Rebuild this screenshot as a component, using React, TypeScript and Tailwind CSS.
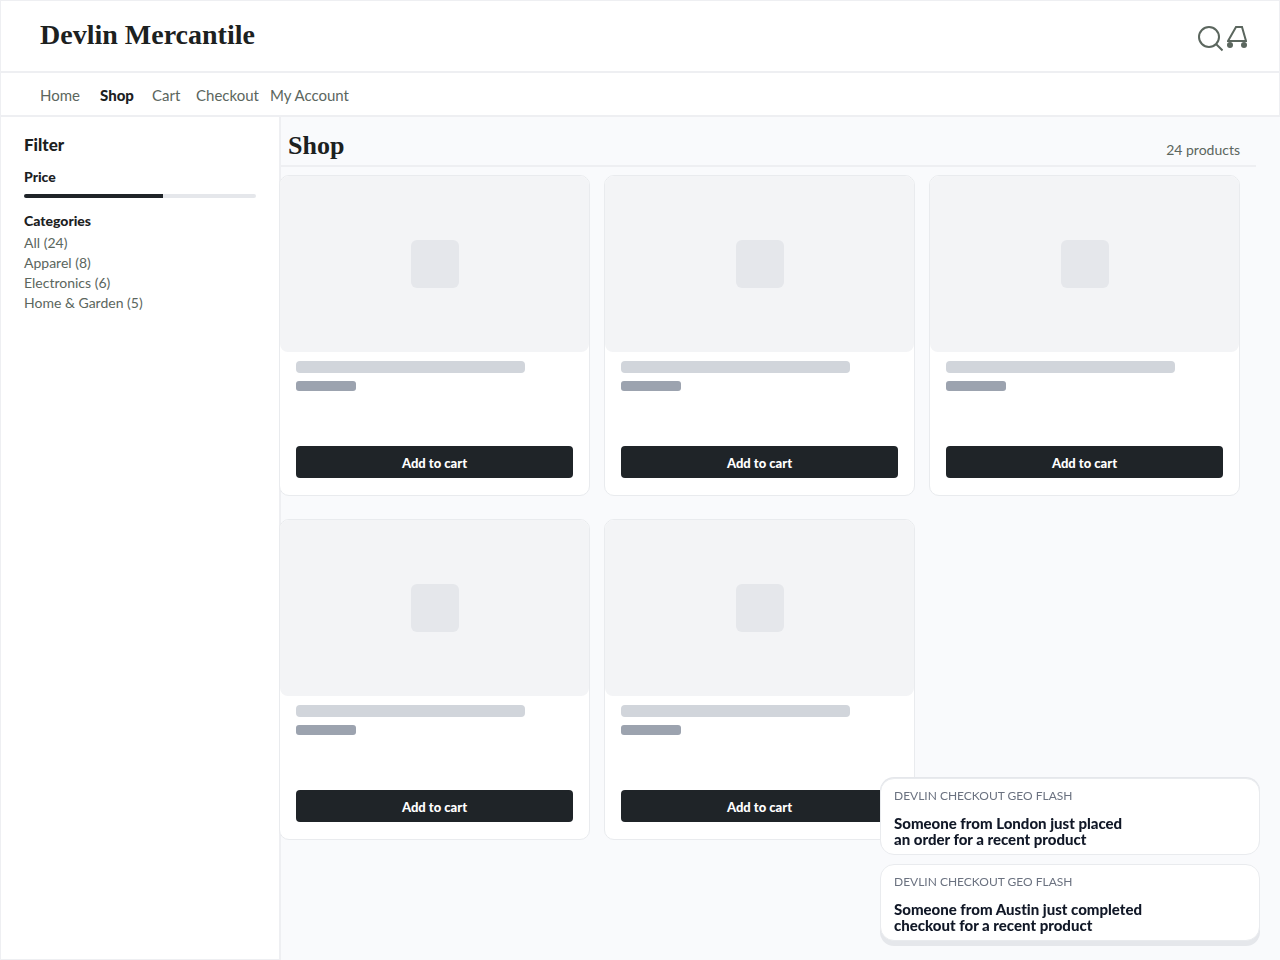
import { useState } from "react";

const navItems = [
  { label: "Home", width: "w-15" },
  { label: "Shop", width: "w-13", active: true },
  { label: "Cart", width: "w-11" },
  { label: "Checkout", width: "w-[74px]" },
  { label: "My Account", width: "w-20" },
];

const categories = [
  { name: "All", count: 24 },
  { name: "Apparel", count: 8 },
  { name: "Electronics", count: 6 },
  { name: "Home & Garden", count: 5 },
];

const products = [1, 2, 3, 4, 5];

const notices = [
  {
    id: "london",
    lines: ["Someone from London just placed", "an order for a recent product"],
    shadow: "shadow-[0_-1px_0_#e5e7eb]",
  },
  {
    id: "austin",
    lines: ["Someone from Austin just completed", "checkout for a recent product"],
    shadow: "shadow-[0_5px_0_#e5e7eb]",
  },
];

function Header() {
  return (
    <header className="flex h-[73px] items-center justify-between border border-b-2 border-[#eeeff2] bg-white pr-8 pl-[39px]">
      <a
        href="#"
        className="pb-0.5 font-['Liberation_Serif',serif] text-[28px] leading-9 font-bold text-[#1c211f]"
      >
        Devlin Mercantile
      </a>
      <div className="flex items-center gap-1 pt-1.5 text-[#5b665e]">
        <button aria-label="Search">
          <svg
            width="26"
            height="26"
            viewBox="0 0 26 26"
            fill="none"
            stroke="currentColor"
            strokeWidth="2"
          >
            <circle cx="12" cy="11" r="10" />
            <path d="M19 18 L25.5 24.5" />
          </svg>
        </button>
        <button aria-label="Open cart">
          <svg
            width="20"
            height="26"
            viewBox="0 0 20 26"
            fill="none"
            stroke="currentColor"
            strokeWidth="2"
          >
            <path d="M9 1 H15 L19 15 H1 Z" />
            <circle cx="3" cy="19" r="3" fill="currentColor" stroke="none" />
            <circle cx="17" cy="19" r="3" fill="currentColor" stroke="none" />
          </svg>
        </button>
      </div>
    </header>
  );
}

function Nav() {
  return (
    <nav className="flex h-11 items-center border-x border-b-2 border-[#eeeff2] bg-white pt-0.5 pl-[39px] text-[15px] leading-5 text-[#5b665e]">
      {navItems.map((item) => (
        <a
          key={item.label}
          href="#"
          className={`${item.width} whitespace-nowrap ${
            item.active ? "font-black text-[#1c211f]" : ""
          }`}
        >
          {item.label}
        </a>
      ))}
    </nav>
  );
}

function Sidebar() {
  const [price, setPrice] = useState(60);

  return (
    <aside className="w-[281px] shrink-0 border-x border-b border-r-2 border-[#eeeff2] bg-white px-[23px] pt-4 text-[#1c211f]">
      <h2 className="text-[17px] leading-6 font-black">Filter</h2>

      <label htmlFor="price" className="mt-2.5 block text-sm leading-5 font-black">
        Price
      </label>
      <input
        id="price"
        type="range"
        min={0}
        max={100}
        value={price}
        onChange={(e) => setPrice(Number(e.target.value))}
        style={{
          backgroundImage: `linear-gradient(to right, #1f2428 ${price}%, #e5e7eb ${price}%)`,
        }}
        className="mt-[7px] block h-1 w-full cursor-pointer appearance-none rounded-sm [&::-webkit-slider-thumb]:size-0 [&::-webkit-slider-thumb]:appearance-none"
      />

      <h3 className="mt-[13px] text-sm leading-5 font-black">Categories</h3>
      <ul className="mt-0.5 text-sm leading-5 text-[#5b665e]">
        {categories.map((category) => (
          <li key={category.name}>
            <a href="#">
              {category.name} ({category.count})
            </a>
          </li>
        ))}
      </ul>
    </aside>
  );
}

function ProductCard() {
  return (
    <article className="flex h-[321px] flex-col overflow-hidden rounded-[10px] border border-[#e9ebee] bg-white">
      {/* Image placeholder */}
      <div className="flex h-44 items-center justify-center rounded-b-lg bg-[#f3f4f6]">
        <div className="size-12 rounded-md bg-[#e5e7eb]" />
      </div>

      {/* Title and price placeholders */}
      <div className="flex flex-1 flex-col px-4 pt-[9px] pb-[17px]">
        <div className="h-3 w-[229px] max-w-full rounded bg-[#d1d5db]" />
        <div className="mt-2 h-2.5 w-15 rounded-[3px] bg-[#9ca3af]" />
        <button className="mt-auto h-8 w-full rounded bg-[#1f2428] pt-1 text-[13px] font-black text-white">
          Add to cart
        </button>
      </div>
    </article>
  );
}

function OrderNotices() {
  return (
    <div className="fixed right-5 bottom-[19px] flex w-[380px] flex-col gap-[9px]">
      {notices.map((notice) => (
        <div
          key={notice.id}
          role="status"
          className={`rounded-[14px] border border-[#e9ebee] bg-white px-[13px] pt-[9px] pb-[7px] ${notice.shadow}`}
        >
          <p className="text-xs leading-4 text-[#6b7280]">DEVLIN CHECKOUT GEO FLASH</p>
          <p className="mt-[11px] text-[15px] leading-4 font-black text-[#111827]">
            {notice.lines[0]}
            <br />
            {notice.lines[1]}
          </p>
        </div>
      ))}
    </div>
  );
}

export default function App() {
  return (
    <div className="flex min-h-screen flex-col bg-[#f9fafc] font-[Lato,sans-serif] [font-variant-ligatures:none]">
      <Header />
      <Nav />
      <div className="flex flex-1">
        <Sidebar />
        <main className="-ml-0.5 min-w-0 flex-1">
          <div className="mr-6 flex h-[50px] items-center justify-between border-b-2 border-[#eeeff2] pr-4 pl-[9px]">
            <h1 className="pt-2.5 font-['Liberation_Serif',serif] text-[26px] leading-8 font-bold text-[#1c211f]">
              Shop
            </h1>
            <span className="pt-[18px] text-sm leading-5 text-[#5b665e]">24 products</span>
          </div>
          <div className="mt-2 grid grid-cols-3 gap-x-3.5 gap-y-[23px] pr-10">
            {products.map((id) => (
              <ProductCard key={id} />
            ))}
          </div>
        </main>
      </div>
      <OrderNotices />
    </div>
  );
}
